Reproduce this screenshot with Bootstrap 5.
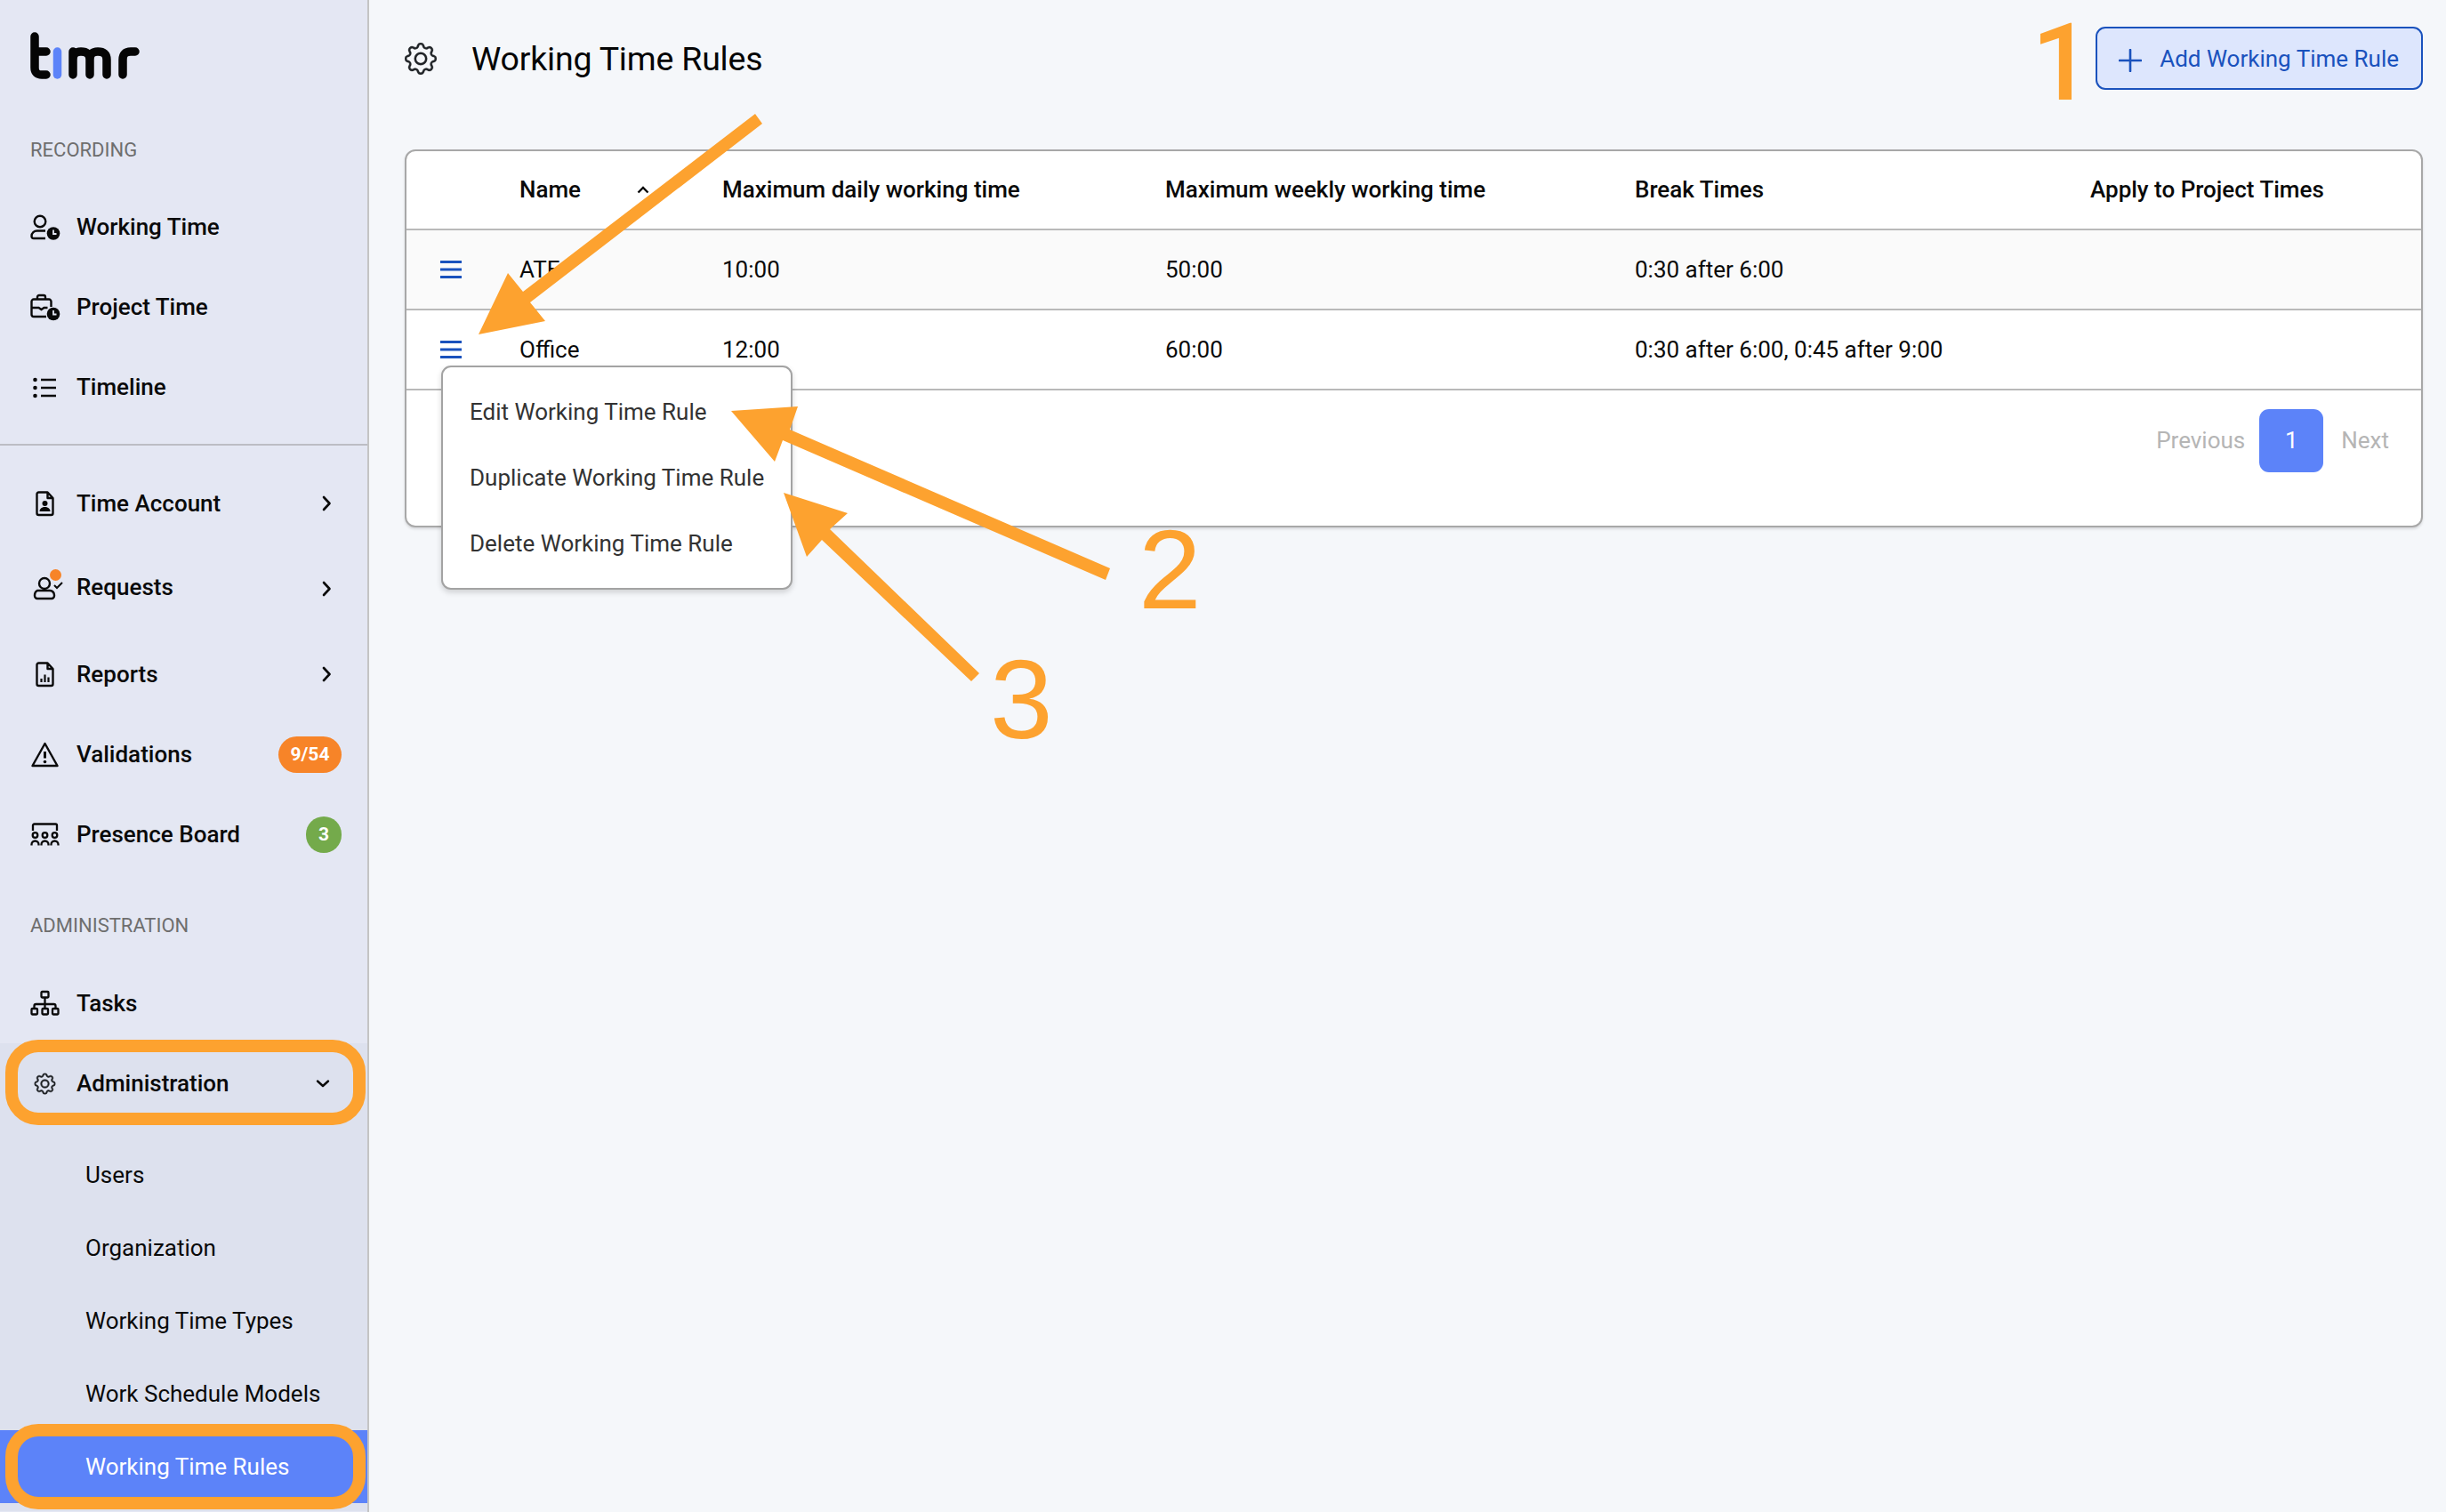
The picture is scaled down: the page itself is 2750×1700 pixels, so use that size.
<!DOCTYPE html>
<html lang="en"><head><meta charset="utf-8"><title>Working Time Rules</title>
<link rel="stylesheet" href="https://cdn.jsdelivr.net/npm/bootstrap@5.3.0/dist/css/bootstrap.min.css">
<style>
html,body{height:1700px;overflow:hidden}
body{font-family:Roboto,"Liberation Sans",sans-serif;background:#f5f7fa;color:#0a0a0a;font-size:26px;position:relative}
.shell{height:1700px}
.side{width:415px;flex:0 0 415px;background:#e4e7f3;border-right:2px solid #c4c4c4;height:1700px;overflow:hidden}
.brand{height:150px;padding:36px 0 0 34px}
.brand svg{display:block}
.side-label{height:38px;padding-left:34px;font-size:22px;line-height:38px;color:#6e6e6e}
.side-link.nav-link{height:90px;padding:0 30px 0 34px;color:#0a0a0a;font-weight:500;font-size:26px}
.side-ico{width:33px;height:33px;flex:0 0 33px;margin-right:19px;overflow:visible;display:block}
.side-ico use{stroke:#0a0a0a;stroke-width:.3}
.rec-list{margin-top:22px}
.side-rule{height:2px;background:#bcbdc4;margin:19px 0 20px;opacity:1;border:0}
.side-link.gap-s{margin-bottom:4px}
.side-link.gap-l{margin-bottom:8px}
.more-chev{width:18px;height:18px;margin-left:auto;margin-right:7px;overflow:visible}
.chev-low{margin-top:4px}
.chev-down{margin-right:11px}
.num-pill{height:41px;border-radius:21px;color:#fff;font-size:21px;font-weight:700;line-height:41px;padding:0;text-align:center;margin-left:auto;--bs-badge-padding-x:0;--bs-badge-padding-y:0;--bs-badge-font-size:21px;--bs-badge-border-radius:21px}
.pill-o{width:71px;background:#f78428;margin-right:-1px}
.pill-g{width:40px;background:#74aa4b;margin-right:-1px}
.admin-label{margin-top:39px;margin-bottom:23px}
.admin-group{background:#dde1ee;height:526px}
.sub-list{margin-top:17px}
.sub-link.nav-link{height:82px;padding:0 0 0 96px;display:flex;align-items:center;color:#0a0a0a;font-size:26px}
.sub-link.on{background:#5c83f9;color:#fff}
.work{padding:30px 26px 0 40px;min-width:0}
.head-row{height:71px;margin-bottom:67px}
.head-title{font-size:37.500px;font-weight:400;margin:2px 0 0;color:#050505;letter-spacing:-.2px}
.head-gear{width:36px;height:36px;margin-right:39px;flex:0 0 36px;overflow:visible}
.head-gear use{stroke:#050505;stroke-width:.12}
.add-btn.btn{height:71px;padding:1px 25px 0 24px;background:#dde6fd;border:2px solid #1a52bd;color:#1a52bd;font-size:26px;border-radius:11px;display:flex;align-items:center;gap:20px}
.add-btn svg{width:26px;height:26px;margin-top:3px}
.rule-card.card{border:2px solid #a8a8a8;border-radius:12px;height:425px;background:#fff;box-shadow:0 2px 3px rgba(0,0,0,.12)}
.rule-table.table{table-layout:fixed;margin:0;--bs-table-border-color:#b9b9b9;--bs-table-bg:transparent;font-size:26px}
.rule-table th,.rule-table td{padding:0;vertical-align:middle;height:90px;border-bottom:2px solid #b9b9b9;color:#0a0a0a}
.rule-table th{font-weight:500;height:88px}
.rule-table tbody tr.tint td{background:#fafafa}
.rule-table tbody tr td{background:#fff}
.w1{width:127px}.w2{width:228px}.w3{width:498px}.w4{width:528px}.w5{width:512px}
.burger{display:block;width:24px;height:20px;margin-left:38px;overflow:visible}
.name-sort{width:146px}
.pager.pagination{margin:21px 36px 0 0;justify-content:flex-end;align-items:center;--bs-pagination-border-width:0;gap:0}
.pager .page-link{background:transparent;border:0;font-size:26px;color:#b5b5b5;padding:0;line-height:71px;height:71px}
.pager .page-item.disabled .page-link{color:#b5b5b5;background:transparent}
.pager .page-item.active .page-link{background:#5c83f9;color:#fff;width:72px;text-align:center;border-radius:11px;margin:0 21px 0 16px}
.row-menu.dropdown-menu{display:block;position:absolute;left:39px;top:62px;width:395px;height:252px;padding:13px 0;border:2px solid #a3a3a3;border-radius:11px;box-shadow:0 3px 6px rgba(0,0,0,.16);background:#fff;z-index:5}
.row-menu .dropdown-item{height:74px;padding:0 0 0 30px;display:flex;align-items:center;font-size:26px;color:#333;background:transparent}
.menu-cell{position:relative}
.marks{position:absolute;left:0;top:0;width:2750px;height:1700px;pointer-events:none;z-index:10}
.mark-digit{font-family:"Liberation Sans",Arial,sans-serif;font-size:127px;fill:#fda22f}
.mark-one{font-family:Roboto,sans-serif;font-size:120px;font-weight:500;fill:#fda22f}
</style></head>
<body>
<svg width="0" height="0" class="position-absolute"><defs>
<symbol id="gear" viewBox="0 0 16 16"><path fill="currentColor" d="M8 4.754a3.246 3.246 0 1 0 0 6.492 3.246 3.246 0 0 0 0-6.492zM5.754 8a2.246 2.246 0 1 1 4.492 0 2.246 2.246 0 0 1-4.492 0z"/><path fill="currentColor" d="M9.796 1.343c-.527-1.79-3.065-1.79-3.592 0l-.094.319a.873.873 0 0 1-1.255.52l-.292-.16c-1.64-.892-3.433.902-2.54 2.541l.159.292a.873.873 0 0 1-.52 1.255l-.319.094c-1.79.527-1.79 3.065 0 3.592l.319.094a.873.873 0 0 1 .52 1.255l-.16.292c-.892 1.64.901 3.434 2.541 2.54l.292-.159a.873.873 0 0 1 1.255.52l.094.319c.527 1.79 3.065 1.79 3.592 0l.094-.319a.873.873 0 0 1 1.255-.52l.292.16c1.64.893 3.434-.902 2.54-2.541l-.159-.292a.873.873 0 0 1 .52-1.255l.319-.094c1.79-.527 1.79-3.065 0-3.592l-.319-.094a.873.873 0 0 1-.52-1.255l.16-.292c.893-1.64-.902-3.433-2.541-2.54l-.292.159a.873.873 0 0 1-1.255-.52l-.094-.319zm-2.633.283c.246-.835 1.428-.835 1.674 0l.094.319a1.873 1.873 0 0 0 2.693 1.115l.291-.16c.764-.415 1.6.42 1.184 1.185l-.159.292a1.873 1.873 0 0 0 1.116 2.692l.318.094c.835.246.835 1.428 0 1.674l-.319.094a1.873 1.873 0 0 0-1.115 2.693l.16.291c.415.764-.42 1.6-1.185 1.184l-.291-.159a1.873 1.873 0 0 0-2.693 1.116l-.094.318c-.246.835-1.428.835-1.674 0l-.094-.319a1.873 1.873 0 0 0-2.692-1.115l-.292.16c-.764.415-1.6-.42-1.184-1.185l.159-.291A1.873 1.873 0 0 0 1.945 8.93l-.319-.094c-.835-.246-.835-1.428 0-1.674l.319-.094A1.873 1.873 0 0 0 3.06 4.377l-.16-.292c-.415-.764.42-1.6 1.185-1.184l.292.159a1.873 1.873 0 0 0 2.692-1.115l.094-.319z"/></symbol>
<symbol id="chev-r" viewBox="0 0 18 18"><path d="M6 2 12.500 9 6 16" fill="none" stroke="#0a0a0a" stroke-width="2.600" stroke-linecap="round" stroke-linejoin="round"/></symbol>
</defs></svg>

<div class="shell d-flex">
<aside class="side">
  <div class="brand">
    <svg width="130" height="60" viewBox="0 0 130 60" fill="none" stroke-width="9.500" stroke-linecap="round" stroke-linejoin="round">
      <path stroke="#050505" d="M5 5V40q0 8 8 8h5M5 22H18"/>
      <path stroke="#5c83f9" d="M30.500 22V48"/>
      <path stroke="#050505" d="M48 48V22M48 31q0-9 9-9q10 0 10 9V48M67 31q0-9 9-9q10 0 10 9V48M104 48V31q0-9 9-9h5"/>
    </svg>
  </div>
  <div class="side-label">RECORDING</div>
  <nav class="nav flex-column rec-list">
    <a class="nav-link side-link d-flex align-items-center" href="#"><svg class="side-ico" viewBox="0 0 33 33" fill="none" stroke="#0a0a0a" stroke-width="2.400"><circle cx="11" cy="10" r="6.300"/><path d="M17 29H4a2.500 2.500 0 0 1-2.500-2.500c0-3.500 3-6 6-6H17"/><circle cx="26" cy="23.500" r="7.300" fill="#0a0a0a" stroke="none"/><path d="M26 19.500v4.500h3.500" stroke="#e4e7f3" stroke-width="1.800"/></svg>Working Time</a>
    <a class="nav-link side-link d-flex align-items-center" href="#"><svg class="side-ico" viewBox="0 0 33 33" fill="none" stroke="#0a0a0a" stroke-width="2.400"><path d="M18 27H4a2.500 2.500 0 0 1-2.500-2.500V10A2.500 2.500 0 0 1 4 7.500h17a2.500 2.500 0 0 1 2.500 2.500v6"/><path d="M8 7.500V5a2 2 0 0 1 2-2h5a2 2 0 0 1 2 2v2.500M1.500 17h8l3 2 3-2h4"/><circle cx="26" cy="24" r="7.300" fill="#0a0a0a" stroke="none"/><path d="M26 20v4.500h3.500" stroke="#e4e7f3" stroke-width="1.800"/></svg>Project Time</a>
    <a class="nav-link side-link d-flex align-items-center" href="#"><svg class="side-ico" viewBox="0 0 33 33" fill="#0a0a0a"><circle cx="5.500" cy="8" r="2.300"/><circle cx="5.500" cy="17" r="2.300"/><circle cx="5.500" cy="26" r="2.300"/><path d="M12 6.800h17v2.500H12zM12 15.800h17v2.500H12zM12 24.800h17v2.500H12z"/></svg>Timeline</a>
  </nav>
  <hr class="side-rule">
  <nav class="nav flex-column">
    <a class="nav-link side-link gap-s d-flex align-items-center" href="#"><svg class="side-ico" viewBox="0 0 33 33" fill="none" stroke="#0a0a0a" stroke-width="2.400" stroke-linejoin="round"><path d="M9.500 3.500h10l6 6.500v17a2 2 0 0 1-2 2H9.500a2 2 0 0 1-2-2v-21.500a2 2 0 0 1 2-2zM19.500 3.500v6.500h6"/><circle cx="16.500" cy="16" r="3" fill="#0a0a0a" stroke="none"/><path d="M10.500 25c0-3.500 3-5 6-5s6 1.500 6 5z" fill="#0a0a0a" stroke="none"/></svg>Time Account<svg class="more-chev"><use href="#chev-r"/></svg></a>
    <a class="nav-link side-link gap-l d-flex align-items-center" href="#"><svg class="side-ico" viewBox="0 0 33 33" fill="none" stroke="#0a0a0a" stroke-width="2.400"><circle cx="16" cy="12" r="6"/><path d="M8 20h14a5.500 5.500 0 0 1 5 5v1a3 3 0 0 1-3 3H8a3 3 0 0 1-3-3v-1a5.500 5.500 0 0 1 3-5z"/><path d="M27 14l3 3 6-6" stroke-width="2"/><circle cx="28.500" cy="2.500" r="6.500" fill="#f78428" stroke="none"/></svg>Requests<svg class="more-chev chev-low"><use href="#chev-r"/></svg></a>
    <a class="nav-link side-link d-flex align-items-center" href="#"><svg class="side-ico" viewBox="0 0 33 33" fill="none" stroke="#0a0a0a" stroke-width="2.400" stroke-linejoin="round"><path d="M9.500 3.500h10l6 6.500v17a2 2 0 0 1-2 2H9.500a2 2 0 0 1-2-2v-21.500a2 2 0 0 1 2-2zM19.500 3.500v6.500h6"/><path d="M12.500 25v-4M16.500 25v-8.500M20.500 25v-5.500" stroke-width="2.200"/></svg>Reports<svg class="more-chev"><use href="#chev-r"/></svg></a>
    <a class="nav-link side-link d-flex align-items-center" href="#"><svg class="side-ico" viewBox="0 0 33 33" fill="none" stroke="#0a0a0a" stroke-width="2.400" stroke-linejoin="round"><path d="M16.500 4 2.500 29h28z"/><path d="M16.500 13v7.500" stroke-width="3"/><circle cx="16.500" cy="24.500" r="1.800" fill="#0a0a0a" stroke="none"/></svg>Validations<span class="badge num-pill pill-o">9/54</span></a>
    <a class="nav-link side-link d-flex align-items-center" href="#"><svg class="side-ico" viewBox="0 0 33 33" fill="none" stroke="#0a0a0a" stroke-width="2.300"><path d="M3 12V6a1.500 1.500 0 0 1 1.500-1.500h24A1.500 1.500 0 0 1 30 6v6"/><circle cx="5.500" cy="17" r="2.800"/><circle cx="16.500" cy="17" r="2.800"/><circle cx="27.500" cy="17" r="2.800"/><path d="M1.500 28.500v-1a4 4 0 0 1 8 0v1M12.500 28.500v-1a4 4 0 0 1 8 0v1M23.500 28.500v-1a4 4 0 0 1 8 0v1"/></svg>Presence Board<span class="badge num-pill pill-g">3</span></a>
  </nav>
  <div class="side-label admin-label">ADMINISTRATION</div>
  <nav class="nav flex-column">
    <a class="nav-link side-link d-flex align-items-center" href="#"><svg class="side-ico" viewBox="0 0 33 33" fill="none" stroke="#0a0a0a" stroke-width="2.300" stroke-linejoin="round"><rect x="12.500" y="3" width="8" height="6.500" rx="1"/><rect x="1.500" y="22" width="6.500" height="6.500" rx="1"/><rect x="13.500" y="22" width="6.500" height="6.500" rx="1"/><rect x="25" y="22" width="6.500" height="6.500" rx="1"/><path d="M16.500 9.500V22M4.500 22v-3a2 2 0 0 1 2-2h20a2 2 0 0 1 2 2v3"/></svg>Tasks</a>
  </nav>
  <div class="admin-group">
    <a class="nav-link side-link d-flex align-items-center" href="#"><svg class="side-ico text-dark" viewBox="0 0 33 33"><use href="#gear" x="4.500" y="4.500" width="24" height="24"/></svg>Administration<svg class="more-chev chev-down" viewBox="0 0 18 18"><path d="M3 6.500 9 12l6-5.500" fill="none" stroke="#0a0a0a" stroke-width="2.400" stroke-linecap="round" stroke-linejoin="round"/></svg></a>
    <nav class="nav flex-column sub-list">
      <a class="nav-link sub-link" href="#">Users</a>
      <a class="nav-link sub-link" href="#">Organization</a>
      <a class="nav-link sub-link" href="#">Working Time Types</a>
      <a class="nav-link sub-link" href="#">Work Schedule Models</a>
      <a class="nav-link sub-link on" href="#">Working Time Rules</a>
    </nav>
  </div>
</aside>

<main class="work flex-grow-1">
  <div class="head-row d-flex align-items-center justify-content-between">
    <div class="d-flex align-items-center">
      <svg class="head-gear text-dark"><use href="#gear" width="36" height="36"/></svg>
      <h1 class="head-title">Working Time Rules</h1>
    </div>
    <button type="button" class="btn add-btn"><svg viewBox="0 0 26 26"><path d="M13 1v24M1 13h24" stroke="#1a52bd" stroke-width="2.600" stroke-linecap="round"/></svg>Add Working Time Rule</button>
  </div>

  <div class="card rule-card">
    <table class="table rule-table">
      <colgroup><col class="w1"><col class="w2"><col class="w3"><col class="w4"><col class="w5"><col></colgroup>
      <thead><tr><th></th><th><div class="d-flex justify-content-between align-items-center name-sort"><span>Name</span><svg width="14" height="9" viewBox="0 0 14 9"><path d="M1.500 7.500 7 2l5.500 5.500" fill="none" stroke="#0a0a0a" stroke-width="2.400"/></svg></div></th><th>Maximum daily working time</th><th>Maximum weekly working time</th><th>Break Times</th><th>Apply to Project Times</th></tr></thead>
      <tbody>
        <tr class="tint"><td><svg class="burger" viewBox="0 0 24 20"><path d="M0 1.500h24M0 10h24M0 18.500h24" stroke="#1a52bd" stroke-width="3"/></svg></td><td>ATE</td><td>10:00</td><td>50:00</td><td>0:30 after 6:00</td><td></td></tr>
        <tr><td class="menu-cell"><svg class="burger" viewBox="0 0 24 20"><path d="M0 1.500h24M0 10h24M0 18.500h24" stroke="#1a52bd" stroke-width="3"/></svg>
          <ul class="dropdown-menu show row-menu">
            <li><a class="dropdown-item" href="#">Edit Working Time Rule</a></li>
            <li><a class="dropdown-item" href="#">Duplicate Working Time Rule</a></li>
            <li><a class="dropdown-item" href="#">Delete Working Time Rule</a></li>
          </ul></td><td>Office</td><td>12:00</td><td>60:00</td><td>0:30 after 6:00, 0:45 after 9:00</td><td></td></tr>
      </tbody>
    </table>
    <ul class="pagination pager">
      <li class="page-item disabled"><a class="page-link" href="#">Previous</a></li>
      <li class="page-item active"><a class="page-link" href="#">1</a></li>
      <li class="page-item disabled"><a class="page-link" href="#">Next</a></li>
    </ul>
  </div>
</main>
</div>

<svg class="marks" viewBox="0 0 2750 1700">
  <g fill="none" stroke="#fda22f" stroke-width="14">
    <rect x="13" y="1176" width="391" height="82" rx="30"/>
    <rect x="13" y="1608" width="391" height="82" rx="30"/>
  </g>
  <g fill="#fda22f">
    <polygon points="849,128 857,139 596,340 613,361 538,376 571,307 588,328"/>
    <polygon points="822,462 897,457 888,483 1248,639 1243,652 880,495 871,519"/>
    <polygon points="881,554 953,577 933,595 1101,757 1092,766 924,607 907,626"/>
  </g>
  <text class="mark-one" x="2284" y="112">1</text>
  <text class="mark-digit" x="1280" y="684">2</text>
  <text class="mark-digit" x="1113" y="830">3</text>
</svg>
</body></html>
